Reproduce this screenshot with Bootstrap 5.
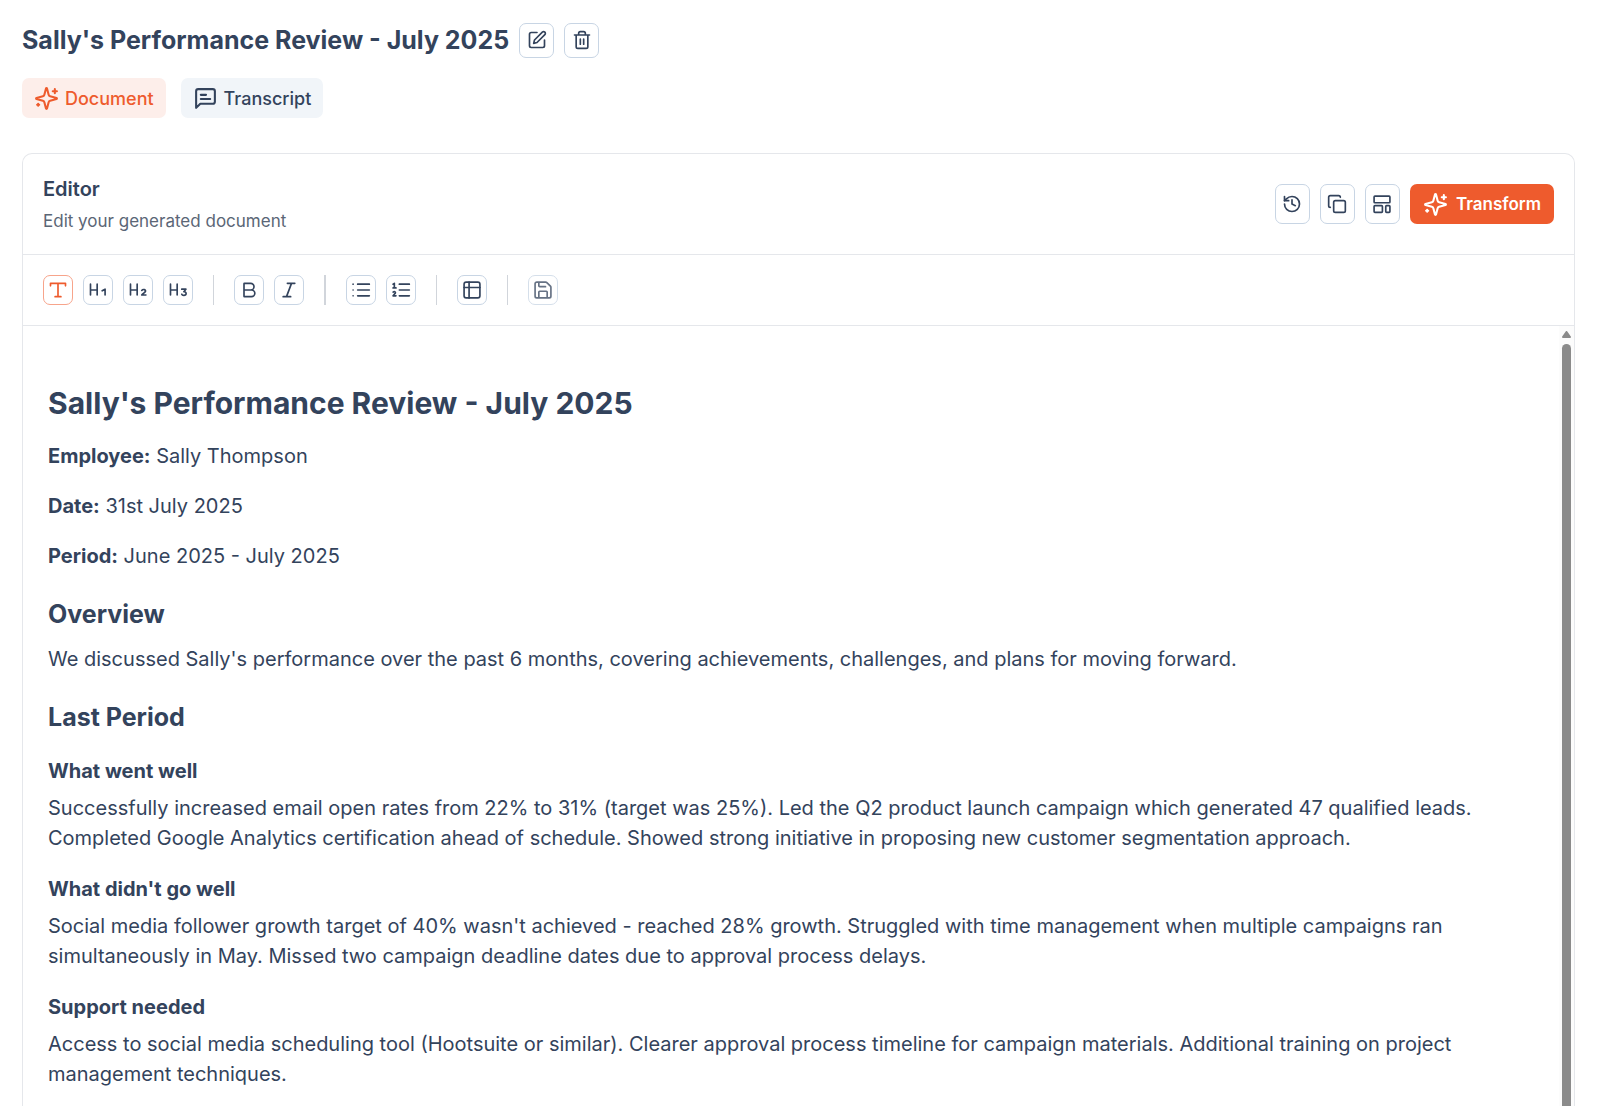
<!DOCTYPE html>
<html lang="en">
<head>
<meta charset="utf-8">
<meta name="viewport" content="width=device-width, initial-scale=1">
<title>Sally's Performance Review - July 2025</title>
<link href="https://cdn.jsdelivr.net/npm/bootstrap@5.3.0/dist/css/bootstrap.min.css" rel="stylesheet">
<style>
  :root { --ink: #33435c; --line: #e5e7eb; --edge: #c8d5e4; --accent: #ee5b2d; }
  body { font-family: Inter, "Open Sans", sans-serif; font-size: 20px; line-height: 30px; color: var(--ink); background: #fff; }
  svg { display: block; flex: none; fill: none; stroke: currentColor; stroke-width: 2; stroke-linecap: round; stroke-linejoin: round; }
  .page { padding: 22px 22px 0; }
  .page-title { font-size: 25px; line-height: 36px; font-weight: 700; }
  .gap-tool { gap: 10px; }
  .gap-tab { gap: 15px; }
  .tool { width: 35px; height: 35px; padding: 0; border: 1px solid var(--edge); border-radius: 7px; background: #fff; color: var(--ink); display: inline-flex; align-items: center; justify-content: center; }
  .tool-tall { height: 40px; }
  .tool-sm { width: 30px; height: 30px; }
  .tool.active { color: var(--accent); border-color: #f7a48b; }
  .tool:disabled { opacity: .75; }
  .tab-btn, .action-btn { height: 40px; border: 0; border-radius: 7px; line-height: 25px; padding: 0 12px; display: inline-flex; align-items: center; }
  .tab-btn { background: #f1f5f9; color: var(--ink); font-size: 18px; font-weight: 500; gap: 6px; }
  .tab-btn.active { background: #fdeeea; color: var(--accent); }
  .action-btn { background: var(--accent); color: #fff; font-size: 17px; font-weight: 600; padding: 0 13px; gap: 8px; }
  .tabs { margin: 20px 0 35px; }
  .panel { border: 1px solid var(--line); border-bottom: 0; border-radius: 10px 10px 0 0; min-height: 0; }
  .panel-head { padding: 20px; border-bottom: 1px solid var(--line); }
  .panel-title { font-size: 20px; line-height: 30px; font-weight: 600; margin: 0 0 5px; }
  .panel-sub { font-size: 17px; line-height: 25px; color: #5b6676; margin: 0; }
  .toolbar { padding: 20px; border-bottom: 1px solid var(--line); }
  .divider { width: 1px; height: 30px; background: #d1d5db; margin: 0 10px; }
  .divider-wide { width: 2px; }
  .doc { padding: 55px 40px 20px 25px; }
  .doc h1 { font-size: 30px; line-height: 45px; font-weight: 700; margin: 0 0 15px; }
  .doc h2 { font-size: 25px; line-height: 35px; font-weight: 700; margin: 26px 0 12px; }
  .doc h3 { font-size: 20px; line-height: 30px; font-weight: 700; margin: 21px 0 7px; }
  .doc p { margin: 0 0 20px; }
  .doc b { font-weight: 700; }
  .scroller { width: 15px; background: #fcfcfc; padding: 5px 3px 0; gap: 5px; flex: none; }
  .scroller svg { fill: #8b8b8b; stroke: #8b8b8b; }
  .thumb { width: 9px; background: #8b8b8b; border-radius: 5px 5px 0 0; }
</style>
</head>
<body class="vh-100 overflow-hidden">
<svg class="d-none" aria-hidden="true">
  <symbol id="sparkles" viewBox="0 0 24 24"><path d="M9.937 15.500A2 2 0 0 0 8.500 14.063l-6.135-1.582a.5.5 0 0 1 0-.962L8.500 9.936A2 2 0 0 0 9.937 8.500l1.582-6.135a.5.5 0 0 1 .963 0L14.063 8.500A2 2 0 0 0 15.500 9.937l6.135 1.581a.5.5 0 0 1 0 .964L15.500 14.063a2 2 0 0 0-1.437 1.437l-1.582 6.135a.5.5 0 0 1-.963 0z"/><path d="M20 3v4M22 5h-4M4 17v2M5 18H3"/></symbol>
</svg>
<main class="page h-100 d-flex flex-column">
  <header class="d-flex align-items-center gap-tool">
    <h1 class="page-title mb-0">Sally's Performance Review - July 2025</h1>
    <button type="button" class="tool" aria-label="Rename"><svg width="20" height="20" viewBox="0 0 24 24"><path d="M12 3H5a2 2 0 0 0-2 2v14a2 2 0 0 0 2 2h14a2 2 0 0 0 2-2v-7"/><path d="M18.400 2.600a2.100 2.100 0 0 1 3 3L12 15l-4 1 1-4Z"/></svg></button>
    <button type="button" class="tool" aria-label="Delete"><svg width="20" height="20" viewBox="0 0 24 24"><path d="M3 6h18M19 6v14a2 2 0 0 1-2 2H7a2 2 0 0 1-2-2V6M8 6V4a2 2 0 0 1 2-2h4a2 2 0 0 1 2 2v2M10 11v6M14 11v6"/></svg></button>
  </header>
  <nav class="tabs d-flex gap-tab">
    <button type="button" class="tab-btn active"><svg width="25" height="25"><use href="#sparkles"/></svg>Document</button>
    <button type="button" class="tab-btn"><svg width="25" height="25" viewBox="0 0 24 24"><path d="M21 15a2 2 0 0 1-2 2H7l-4 4V5a2 2 0 0 1 2-2h14a2 2 0 0 1 2 2zM7.500 8.500h5M7.500 12.500h9"/></svg>Transcript</button>
  </nav>
  <section class="panel flex-fill d-flex flex-column">
    <div class="panel-head d-flex justify-content-between align-items-center">
      <div>
        <h2 class="panel-title">Editor</h2>
        <p class="panel-sub">Edit your generated document</p>
      </div>
      <div class="d-flex gap-tool">
        <button type="button" class="tool tool-tall" aria-label="History"><svg width="20" height="20" viewBox="0 0 24 24"><path d="M3 12a9 9 0 1 0 9-9 9.750 9.750 0 0 0-6.740 2.740L3 8"/><path d="M3 3v5h5M12 7v5l4 2"/></svg></button>
        <button type="button" class="tool tool-tall" aria-label="Copy"><svg width="20" height="20" viewBox="0 0 24 24"><rect x="8" y="8" width="14" height="14" rx="2"/><path d="M4 16c-1.100 0-2-.9-2-2V4c0-1.100.9-2 2-2h10c1.100 0 2 .9 2 2"/></svg></button>
        <button type="button" class="tool tool-tall" aria-label="Templates"><svg width="20" height="20" viewBox="0 0 24 24"><rect x="2.500" y="2.500" width="19" height="8" rx="1"/><rect x="2.500" y="14" width="10" height="8" rx="1"/><rect x="16.500" y="14" width="5" height="8" rx="1"/></svg></button>
        <button type="button" class="action-btn"><svg width="25" height="25"><use href="#sparkles"/></svg>Transform</button>
      </div>
    </div>
    <div class="toolbar d-flex gap-tool" role="toolbar" aria-label="Formatting">
      <button type="button" class="tool tool-sm active" aria-label="Text"><svg width="20" height="20" viewBox="0 0 24 24"><path d="M3 7V4h18v3M12 4v16M8.500 20h7"/></svg></button>
      <button type="button" class="tool tool-sm" aria-label="Heading 1"><svg width="20" height="20" viewBox="0 0 24 24"><path d="M3 5v13M11 5v13M3 12h8"/><path d="M17 13l3.500-2v7"/></svg></button>
      <button type="button" class="tool tool-sm" aria-label="Heading 2"><svg width="20" height="20" viewBox="0 0 24 24"><path d="M3 5v13M11 5v13M3 12h8"/><path d="M16.500 12.500c1.500-2 5-1 4.500 1-.3 1.500-3 2.500-4.500 4.500h5"/></svg></button>
      <button type="button" class="tool tool-sm" aria-label="Heading 3"><svg width="20" height="20" viewBox="0 0 24 24"><path d="M3 5v13M11 5v13M3 12h8"/><path d="M16.500 11h5L19 14c3.800 0 3.500 4.500 0 4.500q-2 0-2.500-1.500"/></svg></button>
      <span class="divider"></span>
      <button type="button" class="tool tool-sm" aria-label="Bold"><svg width="20" height="20" viewBox="0 0 24 24"><path d="M6 12h9a4 4 0 0 1 0 8H6.500a.5.5 0 0 1-.5-.5v-15a.5.5 0 0 1 .5-.5H14a4 4 0 0 1 0 8"/></svg></button>
      <button type="button" class="tool tool-sm" aria-label="Italic"><svg width="20" height="20" viewBox="0 0 24 24"><path d="M19 4h-9M14 20H5M15 4L9 20"/></svg></button>
      <span class="divider divider-wide"></span>
      <button type="button" class="tool tool-sm" aria-label="Bulleted list"><svg width="20" height="20" viewBox="0 0 24 24"><path d="M8 5h14M8 12h14M8 19h14M2.500 5h.01M2.500 12h.01M2.500 19h.01"/></svg></button>
      <button type="button" class="tool tool-sm" aria-label="Numbered list"><svg width="20" height="20" viewBox="0 0 24 24"><path d="M10 5h12M10 12h12M10 19h12M2.500 5L4 4v5.500M2.500 9.500h3.500M2.500 14.500c2-1.500 4 .5 2 2l-2 2.500h3.500"/></svg></button>
      <span class="divider"></span>
      <button type="button" class="tool tool-sm" aria-label="Insert table"><svg width="20" height="20" viewBox="0 0 24 24"><rect x="2.500" y="2.500" width="19" height="19" rx="2.500"/><path d="M2.500 9h19M8.500 2.500v19"/></svg></button>
      <span class="divider"></span>
      <button type="button" class="tool tool-sm" aria-label="Save" disabled><svg width="20" height="20" viewBox="0 0 24 24"><path d="M15.200 2.500a2 2 0 0 1 1.400.6l4.300 4.300a2 2 0 0 1 .6 1.400V19.500a2 2 0 0 1-2 2h-15a2 2 0 0 1-2-2v-15a2 2 0 0 1 2-2zM17 21.500v-7a1 1 0 0 0-1-1H8a1 1 0 0 0-1 1v7M7 3v4a1 1 0 0 0 1 1h7"/></svg></button>
    </div>
    <div class="flex-fill d-flex overflow-hidden">
      <article class="doc flex-fill">
        <h1>Sally's Performance Review - July 2025</h1>
        <p><b>Employee:</b> Sally Thompson</p>
        <p><b>Date:</b> 31st July 2025</p>
        <p><b>Period:</b> June 2025 - July 2025</p>
        <h2>Overview</h2>
        <p>We discussed Sally's performance over the past 6 months, covering achievements, challenges, and plans for moving forward.</p>
        <h2>Last Period</h2>
        <h3>What went well</h3>
        <p>Successfully increased email open rates from 22% to 31% (target was 25%). Led the Q2 product launch campaign which generated 47 qualified leads. Completed Google Analytics certification ahead of schedule. Showed strong initiative in proposing new customer segmentation approach.</p>
        <h3>What didn't go well</h3>
        <p>Social media follower growth target of 40% wasn't achieved - reached 28% growth. Struggled with time management when multiple campaigns ran simultaneously in May. Missed two campaign deadline dates due to approval process delays.</p>
        <h3>Support needed</h3>
        <p>Access to social media scheduling tool (Hootsuite or similar). Clearer approval process timeline for campaign materials. Additional training on project management techniques.</p>
      </article>
      <div class="scroller d-flex flex-column" aria-hidden="true">
        <svg width="9" height="8" viewBox="0 0 9 8"><path d="M4.500 1L8 6H1z"/></svg>
        <div class="thumb flex-fill"></div>
      </div>
    </div>
  </section>
</main>
<script src="https://cdn.jsdelivr.net/npm/bootstrap@5.3.0/dist/js/bootstrap.bundle.min.js"></script>
</body>
</html>
